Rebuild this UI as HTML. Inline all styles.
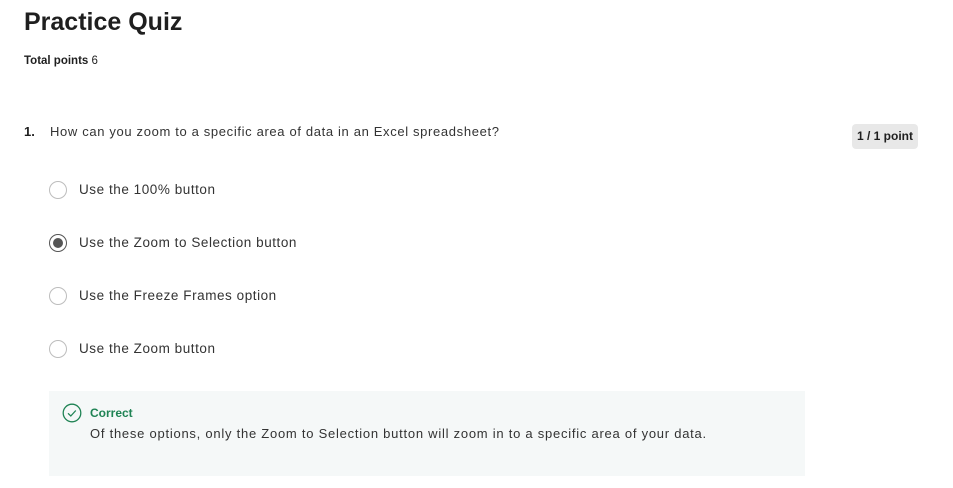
<!DOCTYPE html>
<html><head><style>
body{margin:0;background:#fff;font-family:"Liberation Sans",sans-serif;color:#1f1f1f;width:953px;height:488px;overflow:hidden;position:relative}
.a{position:absolute;white-space:nowrap}
.r{position:absolute;width:16px;height:16px;border:1.5px solid #bdbdbd;border-radius:50%;left:49px}
.opt{position:absolute;left:79px;font-size:13.5px;color:#333;letter-spacing:0.55px;white-space:nowrap}
</style></head><body>
<div class="a" style="left:24px;top:8px;font-size:25px;font-weight:bold;color:#1f1f1f">Practice Quiz</div>
<div class="a" style="left:24px;top:55px;font-size:11.5px"><b>Total points</b> 6</div>
<div class="a" style="left:24px;top:124px;font-size:13px"><b>1.</b></div>
<div class="a" style="left:50px;top:124px;font-size:13px;color:#333;letter-spacing:0.65px">How can you zoom to a specific area of data in an Excel spreadsheet?</div>
<div class="a" style="left:852px;top:124px;width:66px;height:25px;background:#e8e8e8;border-radius:4px;font-size:12px;font-weight:bold;line-height:25px;text-align:center">1 / 1 point</div>
<div class="r" style="top:181px"></div><div class="opt" style="top:182px">Use the 100% button</div>
<div class="r" style="top:234px;border-color:#555"><div style="position:absolute;left:3px;top:3px;width:10px;height:10px;border-radius:50%;background:#555"></div></div><div class="opt" style="top:235px">Use the Zoom to Selection button</div>
<div class="r" style="top:287px"></div><div class="opt" style="top:288px">Use the Freeze Frames option</div>
<div class="r" style="top:340px"></div><div class="opt" style="top:341px">Use the Zoom button</div>
<div class="a" style="left:49px;top:391px;width:756px;height:85px;background:#f5f8f8"></div>
<svg class="a" style="left:62px;top:403px" width="20" height="20" viewBox="0 0 20 20"><circle cx="10" cy="10" r="8.8" fill="none" stroke="#1f8354" stroke-width="1.3"/><path d="M6 10.3l2.8 2.7 5-5.5" fill="none" stroke="#1f8354" stroke-width="1.3"/></svg>
<div class="a" style="left:90px;top:406px;font-size:12px;font-weight:bold;color:#1f8354">Correct</div>
<div class="a" style="left:90px;top:426px;font-size:13px;color:#333;letter-spacing:0.75px">Of these options, only the Zoom to Selection button will zoom in to a specific area of your data.</div>
</body></html>
